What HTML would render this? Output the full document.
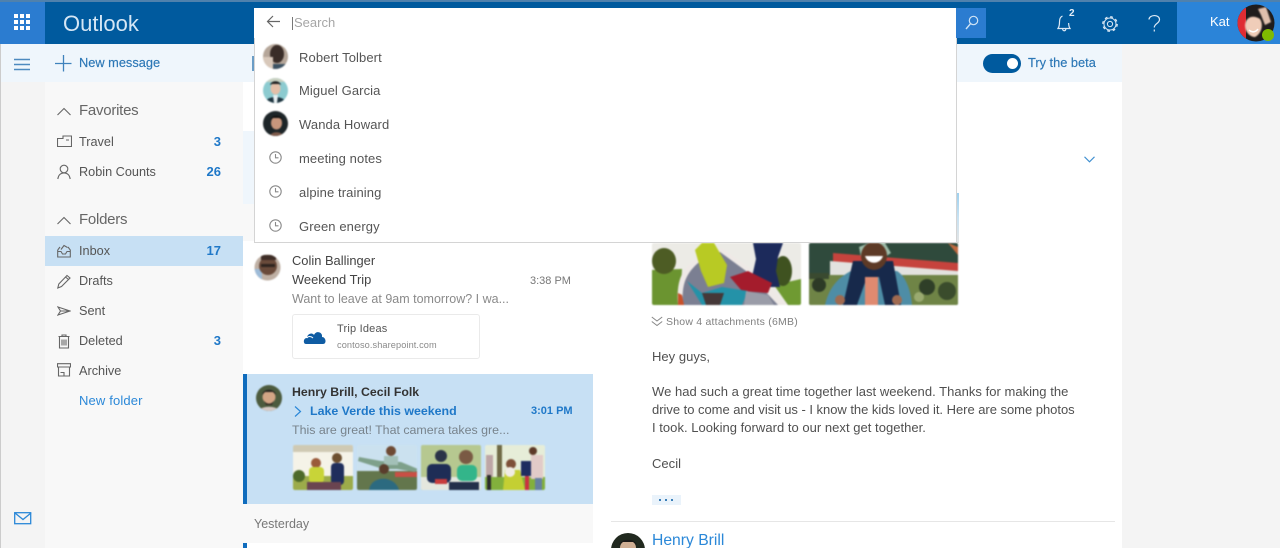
<!DOCTYPE html>
<html><head><meta charset="utf-8"><style>
html,body{margin:0;padding:0}
body{width:1280px;height:548px;overflow:hidden;position:relative;background:#f4f4f4;font-family:"Liberation Sans",sans-serif;color:#444}
#w{position:absolute;left:0;top:0;width:1280px;height:548px;overflow:hidden;filter:blur(.35px)}
.a{position:absolute}
.t{position:absolute;white-space:nowrap;font-size:13px;line-height:18px}
.n{font-size:12.7px;color:#555}
.h{font-size:15px;line-height:20px;letter-spacing:-.25px;color:#666}
.s{color:#555;letter-spacing:.1px}
.r{color:#505050;letter-spacing:.03px}
.b{color:#1f78c8;font-weight:bold;text-align:right;width:30px}
svg{position:absolute;overflow:hidden}
.i{fill:none;stroke:#666;stroke-width:1.1}
.c{fill:none;stroke:#8a8a8a;stroke-width:1.1}
.p{filter:blur(.7px);border-radius:2px}
</style></head><body><div id="w">
<!-- Frame -->
<div class="a" style="left:0;top:0;width:1280px;height:2px;background:#4f81ad"></div>
<div class="a" style="left:0;top:2px;width:45px;height:42px;background:#2b7cd0"></div>
<div class="a" style="left:45px;top:2px;width:1132px;height:42px;background:#005a9e"></div>
<div class="a" style="left:1177px;top:2px;width:103px;height:42px;background:#2b84d8"></div>
<div class="a" style="left:0;top:44px;width:1122px;height:38px;background:#eff6fc"></div>
<div class="a" style="left:0;top:82px;width:45px;height:466px;background:#f4f4f4"></div>
<div class="a" style="left:0;top:44px;width:1px;height:504px;background:#ccc"></div>
<div class="a" style="left:45px;top:82px;width:198px;height:466px;background:#f8f8f8"></div>
<div class="a" style="left:243px;top:82px;width:350px;height:466px;background:#fff"></div>
<div class="a" style="left:243px;top:131px;width:350px;height:73px;background:#eff6fc"></div>
<div class="a" style="left:243px;top:204px;width:350px;height:37px;background:#f8f8f8"></div>
<div class="a" style="left:593px;top:82px;width:529px;height:466px;background:#fff"></div>
<div class="a" style="left:1122px;top:44px;width:158px;height:504px;background:#f4f4f4"></div>

<!-- Waffle -->
<svg style="left:14px;top:14px" width="17" height="17" fill="#fff"><rect x="0" y="0" width="4" height="4"/><rect x="6" y="0" width="4" height="4"/><rect x="12" y="0" width="4" height="4"/><rect x="0" y="6" width="4" height="4"/><rect x="6" y="6" width="4" height="4"/><rect x="12" y="6" width="4" height="4"/><rect x="0" y="12" width="4" height="4"/><rect x="6" y="12" width="4" height="4"/><rect x="12" y="12" width="4" height="4"/></svg>
<div class="t" style="left:63px;top:9px;font-size:22px;line-height:29px;color:#d5e6f5">Outlook</div>

<!-- Search -->
<div class="a" style="left:254px;top:8px;width:702px;height:30px;background:#fff"></div>
<div class="a" style="left:956px;top:8px;width:30px;height:30px;background:#2b7cd0"></div>
<svg style="left:964px;top:14px" width="16" height="18"><circle cx="9.5" cy="6.5" r="4.2" fill="none" stroke="#cfe3f5" stroke-width="1.2"/><path d="M6.5 9.700 L2 15" stroke="#cfe3f5" stroke-width="1.4" fill="none"/></svg>
<svg style="left:266px;top:15px" width="14" height="13"><path d="M14 6.500H1.500M7 1 L1.500 6.500 L7 12" fill="none" stroke="#666" stroke-width="1.200"/></svg>
<div class="a" style="left:292px;top:17px;width:1px;height:13px;background:#777"></div>
<div class="t" style="left:294px;top:14px;color:#a6a6a6;font-size:13px">Search</div>

<!-- Header icons -->
<svg style="left:1057px;top:14px" width="18" height="19"><path d="M5.500 2 C3 3 2.500 5 2.500 8 C2.500 11 2 13 1 14.500 H13 C12 13 11.700 11.500 11.600 9 M5.500 14.500 C5.800 17.500 8.500 17.500 9 14.500" fill="none" stroke="#dce9f5" stroke-width="1.200"/></svg>
<div class="t" style="left:1069px;top:8px;font-size:10px;line-height:11px;font-weight:bold;color:#e6eff8">2</div>
<svg style="left:1101px;top:15px" width="18" height="18"><circle cx="9" cy="9" r="2.600" fill="none" stroke="#dce9f5" stroke-width="1"/><circle cx="9" cy="9" r="6" fill="none" stroke="#dce9f5" stroke-width="1"/><circle cx="9" cy="9" r="7.200" fill="none" stroke="#dce9f5" stroke-width="1.300" stroke-dasharray="2.800 2.850"/></svg>
<svg style="left:1148px;top:14px" width="13" height="19"><path d="M1 5.500 C1 .5 11.500 0 11.500 5.500 C11.500 9.500 6.300 9.500 6.300 13.500M6.300 15.500V17.500" fill="none" stroke="#dce9f5" stroke-width="1.200"/></svg>
<div class="t" style="left:1210px;top:13px;color:#fff;font-size:13px">Kat</div>
<svg style="left:1237px;top:4px" width="38" height="38" viewBox="0 0 38 38">
<defs><clipPath id="k"><circle cx="19" cy="19" r="18.500"/></clipPath><filter id="bl"><feGaussianBlur stdDeviation=".7"/></filter></defs>
<g clip-path="url(#k)"><rect width="38" height="38" fill="#1f1c1c"/><rect width="9" height="32" y="4" fill="#df2c33"/><path d="M8 21 C9 12 17 11 23 15 C27 21 24 30 18 33 C13 33 8 28 8 21Z" fill="#f0cdb9" filter="url(#bl)"/><path d="M21 5 L29 3 L34 18 L28 21 L24 11Z" fill="#dfbfad" filter="url(#bl)"/><path d="M12 26 C15 29 19 28 21 25" stroke="#fff" stroke-width="1.500" fill="none"/></g>
<circle cx="31" cy="31" r="6" fill="#7fba00"/></svg>

<!-- Command row -->
<svg style="left:14px;top:58px" width="17" height="13" stroke="#4d8abf" stroke-width="1.400"><path d="M0 1.500H16M0 6.500H16M0 11.500H16"/></svg>
<svg style="left:55px;top:55px" width="17" height="17" stroke="#3f82bc" stroke-width="1.300"><path d="M0 8.500H16.500M8.500 0V16.500"/></svg>
<div class="t" style="left:79px;top:54px;color:#2c77b6;font-size:12.800px;-webkit-text-stroke:.15px #2c77b6">New message</div>
<div class="a" style="left:252px;top:56px;width:2px;height:15px;background:#6b9dc6"></div>
<div class="a" style="left:983px;top:54px;width:38px;height:19px;border-radius:10px;background:#005a9e"></div>
<div class="a" style="left:1007px;top:58px;width:11px;height:11px;border-radius:50%;background:#fff"></div>
<div class="t" style="left:1028px;top:54px;color:#2c77b6;font-size:12.800px;-webkit-text-stroke:.15px #2c77b6">Try the beta</div>

<!-- Left nav -->
<svg style="left:57px;top:107px" width="14" height="9"><path d="M.5 8 L7 1.500 L13.500 8" fill="none" stroke="#666" stroke-width="1.100"/></svg>
<div class="t h" style="left:79px;top:101px">Favorites</div>
<svg style="left:57px;top:135px" width="15" height="13"><path d="M.5 3.500H6V1H14.500V11.500H.5ZM.5 3.500V11.500M9 5H12" class="i"/></svg>
<div class="t n" style="left:79px;top:133px">Travel</div><div class="t b" style="left:191px;top:133px">3</div>
<svg style="left:57px;top:164px" width="14" height="16"><circle cx="7" cy="5" r="3.800" class="i"/><path d="M.8 15 C1.500 10.500 4 9 7 9 C10 9 12.500 10.500 13.200 15" class="i"/></svg>
<div class="t n" style="left:79px;top:163px">Robin Counts</div><div class="t b" style="left:191px;top:163px">26</div>
<svg style="left:57px;top:216px" width="14" height="9"><path d="M.5 8 L7 1.500 L13.500 8" fill="none" stroke="#666" stroke-width="1.100"/></svg>
<div class="t h" style="left:79px;top:210px">Folders</div>
<div class="a" style="left:45px;top:236px;width:198px;height:30px;background:#c7e0f4"></div>
<svg style="left:57px;top:244px" width="14" height="14"><path d="M.7 6V13H13.300V6L11 3M.7 6 L3 3M.7 7.500 L4 7.500 L5.500 10H8.500L10 7.500H13.300M4 5.500 L7 1.500 L10.500 3.500" class="i"/></svg>
<div class="t n" style="left:79px;top:242px">Inbox</div><div class="t b" style="left:191px;top:242px">17</div>
<svg style="left:57px;top:274px" width="14" height="15"><path d="M.8 14 L1.800 10 L10 1.500 L13 4 L4.500 12.500Z M8.500 3 L11.500 5.500" class="i"/></svg>
<div class="t n" style="left:79px;top:272px">Drafts</div>
<svg style="left:57px;top:306px" width="14" height="10"><path d="M1 1 L13 5 L1 9 L3.500 5 L1 1ZM3.500 5H13" class="i"/></svg>
<div class="t n" style="left:79px;top:302px">Sent</div>
<svg style="left:58px;top:334px" width="12" height="15"><path d="M1.500 3V14H10.500V3M.5 2.500H11.500M4 2.500V1H8V2.500M4 5.500V11.500M6 5.500V11.500M8 5.500V11.500" class="i"/></svg>
<div class="t n" style="left:79px;top:332px">Deleted</div><div class="t b" style="left:191px;top:332px">3</div>
<svg style="left:57px;top:363px" width="14" height="14"><path d="M.5 .7H13.500V4H.5ZM1.500 4V13H12.500V4M3.500 9.500H7V13" class="i"/></svg>
<div class="t n" style="left:79px;top:362px">Archive</div>
<div class="t" style="left:79px;top:392px;color:#2b88d8;letter-spacing:.15px">New folder</div>
<svg style="left:14px;top:512px" width="18" height="13"><rect x=".7" y=".7" width="16" height="11" fill="none" stroke="#2b88d8" stroke-width="1.300"/><path d="M1 1 L9 7.500 L17 1" fill="none" stroke="#2b88d8" stroke-width="1.300"/></svg>

<!-- Message list -->
<svg style="left:254px;top:254px" class="p" width="27" height="27" viewBox="0 0 27 27"><defs><clipPath id="c1"><circle cx="13.500" cy="13.500" r="13"/></clipPath></defs><g clip-path="url(#c1)"><rect width="27" height="27" fill="#bfb0a4"/><rect y="15" width="8" height="12" fill="#9dbbd8"/><circle cx="14" cy="12" r="9" fill="#6a4a3a"/><rect x="7" y="10" width="14" height="3" fill="#2f241f"/><rect x="7" y="1" width="15" height="5" fill="#3e2d26"/></g></svg>
<div class="t" style="left:292px;top:252px;color:#444;font-size:12.900px">Colin Ballinger</div>
<div class="t" style="left:292px;top:271px;color:#444;font-size:12.900px">Weekend Trip</div>
<div class="t" style="left:530px;top:272px;font-size:11px;color:#777">3:38 PM</div>
<div class="t" style="left:292px;top:290px;color:#8a8a8a;font-size:12.500px">Want to leave at 9am tomorrow? I wa...</div>
<div class="a" style="left:292px;top:314px;width:186px;height:43px;border:1px solid #eaeaea;border-radius:3px;background:#fff"></div>
<svg style="left:303px;top:328px" width="24" height="17"><path d="M3 16 C0 16 0 10 4 10 C4 6 9 4 11 7 C13 2 20 4 19 9 C23 9 24 16 20 16Z" fill="#0f5ca3"/><path d="M4 10 C5 8 8 8 10 10" stroke="#fff" fill="none"/></svg>
<div class="t" style="left:337px;top:321px;font-size:11px;line-height:16px;color:#555;letter-spacing:.2px">Trip Ideas</div>
<div class="t" style="left:337px;top:338px;font-size:9.200px;line-height:14px;color:#8a8a8a;letter-spacing:.1px">contoso.sharepoint.com</div>

<div class="a" style="left:243px;top:374px;width:350px;height:130px;background:#c7e0f4"></div>
<div class="a" style="left:243px;top:374px;width:4px;height:130px;background:#0f6cbd"></div>
<svg style="left:256px;top:385px" class="p" width="26" height="26" viewBox="0 0 26 26"><defs><clipPath id="c2"><circle cx="13" cy="13" r="13"/></clipPath></defs><g clip-path="url(#c2)"><rect width="26" height="26" fill="#4c5b3e"/><circle cx="13" cy="12" r="6.500" fill="#d3a585"/><path d="M6 10 C7 3 19 3 20 10 L17 7 H9Z" fill="#272420"/><path d="M8 15 C10 20 16 20 18 15 L16 20 H10Z" fill="#352b25"/><path d="M2 27 C4 20 22 20 24 27Z" fill="#d6c9c4"/></g></svg>
<div class="t" style="left:292px;top:383px;color:#333;font-weight:bold;font-size:12.300px">Henry Brill, Cecil Folk</div>
<svg style="left:294px;top:406px" width="8" height="11"><path d="M1 .5 L6.500 5.500 L1 10.500" fill="none" stroke="#2b88d8" stroke-width="1.200"/></svg>
<div class="t" style="left:310px;top:402px;color:#1f78c8;font-weight:bold;font-size:12.400px">Lake Verde this weekend</div>
<div class="t" style="left:531px;top:402px;color:#1f78c8;font-weight:bold;font-size:11px">3:01 PM</div>
<div class="t" style="left:292px;top:421px;color:#78838c;font-size:12.400px">This are great! That camera takes gre...</div>

<svg class="p" style="left:293px;top:445px" width="60" height="45"><rect width="60" height="45" fill="#f5f3e8"/><rect width="60" height="7" fill="#cfc9b3"/><rect y="31" width="60" height="14" fill="#9cab4a"/><circle cx="23" cy="18" r="5" fill="#9a5a3a"/><rect x="16" y="22" width="15" height="16" rx="4" fill="#c8d438"/><circle cx="44" cy="13" r="5" fill="#6d5030"/><rect x="38" y="18" width="13" height="22" rx="4" fill="#1f2e5c"/><rect x="14" y="37" width="34" height="8" fill="#6a4450"/><circle cx="6" cy="31" r="6" fill="#4e6a2a"/></svg>
<svg class="p" style="left:357px;top:445px" width="60" height="45"><rect width="60" height="45" fill="#cbe1ef"/><rect y="26" width="60" height="19" fill="#63764c"/><rect x="38" y="27" width="22" height="5" fill="#c94f45"/><path d="M2 12 L24 16 L44 17 L61 24 L58 27 L40 24 L26 24 L1 16Z" fill="#7ea08a"/><circle cx="34" cy="6" r="5" fill="#6e4a34"/><rect x="27" y="11" width="14" height="9" fill="#a3c0b8"/><circle cx="27" cy="24" r="5" fill="#5a3d2c"/><path d="M12 45 C14 30 38 30 42 45Z" fill="#2c6a80"/></svg>
<svg class="p" style="left:421px;top:445px" width="60" height="45"><rect width="60" height="45" fill="#b6c890"/><rect y="32" width="60" height="13" fill="#e4e7de"/><circle cx="20" cy="11" r="6" fill="#2a3348"/><rect x="6" y="19" width="24" height="19" rx="5" fill="#1e2d56"/><rect x="14" y="34" width="12" height="5" fill="#c83c3c"/><circle cx="45" cy="12" r="7" fill="#7a5a44"/><rect x="36" y="20" width="20" height="16" rx="5" fill="#33b58a"/><rect x="28" y="37" width="30" height="8" fill="#232f4a"/></svg>
<svg class="p" style="left:485px;top:445px" width="60" height="45"><rect width="60" height="45" fill="#e6edd8"/><rect y="32" width="60" height="13" fill="#82b03c"/><rect x="12" y="0" width="5" height="32" fill="#6f6a46"/><rect x="1" y="10" width="7" height="22" fill="#bda6a6"/><rect x="2" y="30" width="4" height="15" fill="#2b2b2b"/><circle cx="26" cy="19" r="5" fill="#7d5038"/><path d="M20 25 H35 L40 45 H18Z" fill="#c4cf33"/><circle cx="25" cy="27" r="5" fill="#f0ece4"/><rect x="36" y="16" width="10" height="15" fill="#1e2d60"/><rect x="40" y="31" width="4" height="14" fill="#cc2f40"/><circle cx="48" cy="6" r="4" fill="#5d3a28"/><rect x="46" y="10" width="12" height="24" fill="#e2cbc8"/><rect x="50" y="33" width="7" height="12" fill="#6680a0"/></svg>

<div class="a" style="left:243px;top:504px;width:350px;height:39px;background:#f8f8f8"></div>
<div class="t" style="left:254px;top:515px;font-size:12.500px;color:#777">Yesterday</div>
<div class="a" style="left:243px;top:543px;width:4px;height:5px;background:#0f6cbd"></div>

<!-- Reading pane -->
<svg style="left:1084px;top:156px" width="11" height="7"><path d="M.5 .8 L5.500 5.800 L10.500 .8" fill="none" stroke="#3f8fd0" stroke-width="1.100"/></svg>
<div class="a" style="left:957px;top:193px;width:2px;height:50px;background:linear-gradient(#9fd0ee,#c8e2f2 50%,#e4e4e4)"></div>

<svg class="p" style="left:652px;top:243px" width="149" height="62" viewBox="0 0 149 62">
<rect width="149" height="62" fill="#ecebe6"/>
<path d="M0 27 L30 26 L28 62 H0Z" fill="#6b9430"/><path d="M122 42 L149 36 V62 H136Z" fill="#6f9a32"/>
<ellipse cx="12" cy="18" rx="12" ry="13" fill="#4d5c24"/>
<path d="M26 62 C24 38 30 26 43 16 L70 5 L98 25 L136 62Z" fill="#eee9e6"/>
<path d="M31 62 C29 40 35 30 46 20 L68 9 L94 28 L126 62Z" fill="#7b7f92"/>
<path d="M26 62 L32 62 L30 52 L26 50Z" fill="#c8502a"/>
<ellipse cx="131" cy="28" rx="9" ry="15" fill="#3f5220"/>
<path d="M43 7 L50 0 H62 L75 22 L72 40 L56 44 L49 28Z" fill="#b8ca24"/>
<path d="M101 0 H131 L126 14 L124 28 L128 44 H104 L100 34 L104 16Z" fill="#1c2a5b"/>
<path d="M78 34 L96 28 L120 40 L116 50 L90 48Z" fill="#a41c2c"/>
<path d="M35 38 L50 50 L70 44 L96 48 L90 62 H50Z" fill="#2492a8"/><path d="M50 50 L72 50 L68 62 H54Z" fill="#453838"/>
<path d="M94 48 L116 52 L122 62 H92Z" fill="#9a9ca8"/>
</svg>
<svg class="p" style="left:809px;top:243px" width="149" height="62" viewBox="0 0 149 62">
<rect width="149" height="62" fill="#2f4a3c"/>
<path d="M24 10 L149 20 V28 L24 22Z" fill="#c6433d"/><path d="M21 18 L149 28 V32 H21Z" fill="#e3e2df"/>
<rect y="32" width="149" height="30" fill="#6f8446"/><rect y="30" width="20" height="6" fill="#3a4a30"/><circle cx="10" cy="42" r="7" fill="#2d3a26"/><circle cx="118" cy="44" r="8" fill="#2f3f28"/><circle cx="138" cy="48" r="9" fill="#3a4c2c"/><circle cx="110" cy="54" r="5" fill="#9aaa70"/>
<path d="M16 62 C20 44 30 34 42 28 H88 C98 34 102 50 103 62Z" fill="#4e8da6"/>
<path d="M34 62 L44 18 H84 L92 62 H76 L70 34 H58 L48 62Z" fill="#17294b"/>
<rect x="56" y="34" width="13" height="28" fill="#df8a70"/>
<path d="M50 4 L60 0 H76 L82 10 L76 14 L52 14Z" fill="#9dbba8"/>
<ellipse cx="65" cy="13" rx="13" ry="14" fill="#5d3a26"/><path d="M56 13 C59 22 71 22 74 13Z" fill="#fff"/>
<path d="M139 0 L149 4 V12Z" fill="#c06a40"/>
<circle cx="31" cy="57" r="5" fill="#a06a50"/><circle cx="88" cy="57" r="5" fill="#a06a50"/>
</svg>

<svg style="left:651px;top:316px" width="12" height="11"><path d="M.8 1 L6 5 L11.200 1M.8 5.500 L6 9.500 L11.200 5.500" fill="none" stroke="#888" stroke-width="1"/></svg>
<div class="t" style="left:666px;top:314px;font-size:10.500px;line-height:16px;color:#808080;letter-spacing:.22px">Show 4 attachments (6MB)</div>

<div class="t r" style="left:652px;top:348px">Hey guys,</div>
<div class="t r" style="left:652px;top:383px">We had such a great time together last weekend. Thanks for making the</div>
<div class="t r" style="left:652px;top:401px;letter-spacing:-.03px">drive to come and visit us - I know the kids loved it. Here are some photos</div>
<div class="t r" style="left:652px;top:419px">I took. Looking forward to our next get together.</div>
<div class="t r" style="left:652px;top:455px">Cecil</div>
<div class="a" style="left:652px;top:495px;width:29px;height:10px;background:#eaf3fb"></div>
<div class="a" style="left:659px;top:499px;width:2px;height:2px;background:#3b7fb8;box-shadow:6px 0 #3b7fb8,12px 0 #3b7fb8"></div>
<div class="a" style="left:611px;top:521px;width:504px;height:1px;background:#e6e6e6"></div>
<svg style="left:611px;top:533px" width="34" height="15" viewBox="0 0 34 15"><defs><clipPath id="c3"><circle cx="17" cy="17" r="17"/></clipPath></defs><g clip-path="url(#c3)"><rect width="34" height="15" fill="#21291f"/><ellipse cx="17" cy="15" rx="8" ry="8" fill="#cfae93"/><path d="M8 12 C10 5 24 5 26 12 L22 9 H12Z" fill="#1c1a18"/></g></svg>
<div class="t" style="left:652px;top:531px;font-size:15.700px;line-height:20px;color:#2b88d8">Henry Brill</div>

<!-- Suggestions dropdown -->
<div class="a" style="left:254px;top:38px;width:701px;height:204px;background:#fff;border:1px solid #d4d4d4;border-top:none"></div>
<svg class="p" style="left:263px;top:44px" width="25" height="25" viewBox="0 0 25 25"><defs><clipPath id="s1"><circle cx="12.500" cy="12.500" r="12.500"/></clipPath></defs><g clip-path="url(#s1)"><rect width="25" height="25" fill="#b5a699"/><ellipse cx="14" cy="10" rx="7" ry="9" fill="#3a2d28"/><rect x="0" y="13" width="10" height="12" fill="#d8c8ba"/><path d="M10 20 H25 V25 H10Z" fill="#3c5263"/></g></svg>
<svg class="p" style="left:263px;top:78px" width="25" height="25" viewBox="0 0 25 25"><defs><clipPath id="s2"><circle cx="12.500" cy="12.500" r="12.500"/></clipPath></defs><g clip-path="url(#s2)"><rect width="25" height="25" fill="#8ccbd0"/><rect x="0" y="0" width="25" height="4" fill="#c8d0c0"/><ellipse cx="12.500" cy="10.500" rx="5" ry="6" fill="#e4bfa8"/><path d="M7 7 C8 2 17 2 18 7 L16 6 H9Z" fill="#1f2122"/><path d="M2 25 C3 17 22 17 23 25Z" fill="#1e3540"/><path d="M10 17 H15 L14 25 H11Z" fill="#e8f0f2"/></g></svg>
<svg class="p" style="left:263px;top:111px" width="25" height="25" viewBox="0 0 25 25"><defs><clipPath id="s3"><circle cx="12.500" cy="12.500" r="12.500"/></clipPath></defs><g clip-path="url(#s3)"><rect width="25" height="25" fill="#1d2528"/><ellipse cx="13.500" cy="12" rx="5.500" ry="6.500" fill="#c8967c"/><path d="M7 9 C9 3 18 3 20 9 L16 7 H10Z" fill="#141414"/><path d="M7 25 C8 20 19 20 20 25Z" fill="#7e5a4a"/></g></svg>
<svg style="left:269px;top:151px" width="13" height="13"><circle cx="6.500" cy="6.500" r="5.700" class="c"/><path d="M6.500 3V6.800H9.500" class="c"/></svg>
<svg style="left:269px;top:185px" width="13" height="13"><circle cx="6.500" cy="6.500" r="5.700" class="c"/><path d="M6.500 3V6.800H9.500" class="c"/></svg>
<svg style="left:269px;top:219px" width="13" height="13"><circle cx="6.500" cy="6.500" r="5.700" class="c"/><path d="M6.500 3V6.800H9.500" class="c"/></svg>
<div class="t s" style="left:299px;top:49px">Robert Tolbert</div>
<div class="t s" style="left:299px;top:82px">Miguel Garcia</div>
<div class="t s" style="left:299px;top:116px">Wanda Howard</div>
<div class="t s" style="left:299px;top:150px">meeting notes</div>
<div class="t s" style="left:299px;top:184px">alpine training</div>
<div class="t s" style="left:299px;top:218px">Green energy</div>
</div></body></html>
